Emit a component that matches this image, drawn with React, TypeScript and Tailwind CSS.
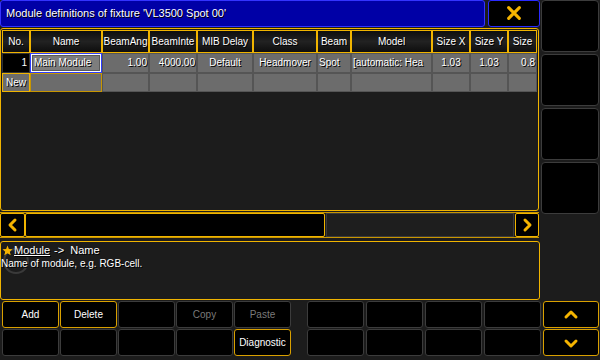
import React from "react";

const COLS = [
  { h: "No.", w: 28 },
  { h: "Name", w: 72 },
  { h: "BeamAng", w: 47 },
  { h: "BeamInte", w: 48 },
  { h: "MIB Delay", w: 56 },
  { h: "Class", w: 64 },
  { h: "Beam", w: 34 },
  { h: "Model", w: 81 },
  { h: "Size X", w: 38 },
  { h: "Size Y", w: 38 },
  { h: "Size", w: 29 },
];

const ROW1 = [
  { t: "1.00", a: "justify-end" },
  { t: "4000.00", a: "justify-end" },
  { t: "Default", a: "justify-center" },
  { t: "Headmover", a: "justify-center" },
  { t: "Spot", a: "justify-start" },
  { t: "[automatic: Hea", a: "justify-start" },
  { t: "1.03", a: "justify-center" },
  { t: "1.03", a: "justify-center" },
  { t: "0.8", a: "justify-end" },
];

function Btn({ label, hot, dim }: { label?: string; hot?: boolean; dim?: boolean }) {
  return (
    <div
      className={`w-[57px] h-[27px] rounded-[3px] bg-black border flex items-center justify-center text-[10px] ${
        hot ? "border-[#d9a000]" : "border-[#3c3c3c]"
      } ${dim ? "text-[#7a7a7a]" : "text-white"}`}
    >
      {label}
    </div>
  );
}

function Chevron({ dir }: { dir: "left" | "right" | "up" | "down" }) {
  const d = {
    left: "M10 3 L5 8 L10 13",
    right: "M6 3 L11 8 L6 13",
    up: "M3 10 L8 5 L13 10",
    down: "M3 6 L8 11 L13 6",
  }[dir];
  return (
    <svg width="16" height="16" viewBox="0 0 16 16">
      <path d={d} fill="none" stroke="#f5b400" strokeWidth="3" strokeLinecap="round" strokeLinejoin="round" />
    </svg>
  );
}

function ButtonRow({ cells, arrow }: { cells: React.ReactNode[]; arrow: "up" | "down" }) {
  return (
    <div className="flex">
      <div className="flex gap-[1px]">{cells.slice(0, 5)}</div>
      <div className="flex gap-[2px] ml-[16px]">{cells.slice(5)}</div>
      <div className="ml-[2px] w-[56px] h-[27px] rounded-[3px] bg-black border border-[#d9a000] flex items-center justify-center">
        <Chevron dir={arrow} />
      </div>
    </div>
  );
}

export default function App() {
  return (
    <div className="w-[600px] h-[360px] bg-[#1c1c1c] font-['Liberation_Sans',Arial,sans-serif] text-white [text-shadow:1px_1px_0_#000] overflow-hidden">
      <div className="flex h-[300px]">
        {/* left */}
        <div className="w-[540px] flex flex-col">
          <div className="flex h-[27px] gap-[3px]">
            <div className="w-[485px] bg-[#0000a6] border border-[#3333ff] rounded-[3px] flex items-center pl-[5px] text-[11px]">
              Module definitions of fixture 'VL3500 Spot 00'
            </div>
            <div className="w-[52px] bg-black border border-[#2a2aff] rounded-[3px] flex items-center justify-center">
              <svg width="16" height="16" viewBox="0 0 18 18">
                <path d="M3 3 L15 15 M15 3 L3 15" stroke="#f5b400" strokeWidth="3.5" strokeLinecap="round" />
              </svg>
            </div>
          </div>

          {/* table panel */}
          <div className="mt-[1px] h-[184px] w-[539px] border border-[#f0b400] rounded-[3px] bg-[#1c1c1c] p-[1px] text-[10px]">
            <div className="flex h-[23px]">
              {COLS.map((c) => (
                <div
                  key={c.h}
                  style={{ width: c.w }}
                  className="shrink-0 border border-[#f0b400] bg-gradient-to-b from-[#0e0e0e] via-[#222222] to-[#0e0e0e] flex items-center justify-center overflow-hidden whitespace-nowrap"
                >
                  {c.h}
                </div>
              ))}
            </div>
            <div className="flex h-[20px]">
              <div className="w-[28px] shrink-0 bg-black border border-[#333] flex items-center justify-end pr-[2px]">1</div>
              <div className="w-[72px] shrink-0 border border-[#2a3cff] bg-white p-[1px]">
                <div className="h-full bg-[#7d7d7d] border border-[#5a5a5a] flex items-center pl-[1px] whitespace-nowrap overflow-hidden">
                  Main Module
                </div>
              </div>
              {ROW1.map((c, i) => (
                <div
                  key={i}
                  style={{ width: COLS[i + 2].w }}
                  className={`shrink-0 bg-[#6c6c6c] border border-[#555] flex items-center ${c.a} px-[1px] whitespace-nowrap overflow-hidden`}
                >
                  {c.t}
                </div>
              ))}
            </div>
            <div className="flex h-[19px]">
              <div className="w-[28px] shrink-0 bg-[#6c6c6c] border border-[#f0b400] flex items-center justify-center">New</div>
              <div className="w-[72px] shrink-0 bg-[#6c6c6c] border border-[#c89600]" />
              {COLS.slice(2).map((c) => (
                <div key={c.h} style={{ width: c.w }} className="shrink-0 bg-[#6c6c6c] border border-[#555]" />
              ))}
            </div>
          </div>

          {/* scroll bar */}
          <div className="mt-[1px] h-[26px] w-[539px] border-y border-[#c89600] flex">
            <div className="w-[25px] bg-black border border-[#f0b400] rounded-[2px] flex items-center justify-center">
              <Chevron dir="left" />
            </div>
            <div className="w-[300px] bg-black border border-[#f0b400] rounded-[2px]" />
            <div className="flex-1 bg-[#1e1e1e] border border-[#3a3a3a] mx-[1px]" />
            <div className="w-[24px] bg-black border border-[#f0b400] rounded-[2px] flex items-center justify-center">
              <Chevron dir="right" />
            </div>
          </div>

          {/* info panel */}
          <div className="mt-[3px] h-[59px] w-[540px] border border-[#f0b400] rounded-[3px] bg-[#1c1c1c] text-[11px] relative overflow-hidden">
            <div className="absolute left-[2px] top-[6px] w-[26px] h-[26px] rounded-full border-2 border-[#3a3a3a]" />
            <div className="relative flex items-center pt-[1px] pl-[1px] leading-[14px]">
              <svg width="11" height="11" viewBox="0 0 24 24">
                <path d="M12 1 L15 8.5 L23 9 L17 14.5 L19 22.5 L12 18 L5 22.5 L7 14.5 L1 9 L9 8.5 Z" fill="#f5b400" />
              </svg>
              <span className="underline ml-[1px]">Module</span>
              <span className="ml-[4px]">-&gt;&nbsp;&nbsp;Name</span>
            </div>
            <div className="relative leading-[14px] text-[10px]">Name of module, e.g. RGB-cell.</div>
          </div>
        </div>

        {/* right column */}
        <div className="ml-[1px] w-[58px] flex flex-col gap-[2px]">
          {[0, 1, 2, 3].map((i) => (
            <div key={i} className="h-[52px] bg-black border border-[#3c3c3c] rounded-[4px]" />
          ))}
        </div>
      </div>

      {/* bottom buttons */}
      <div className="flex flex-col gap-[1px] mt-[1px] pl-[2px]">
        <ButtonRow
          arrow="up"
          cells={[
            <Btn key="a" label="Add" hot />,
            <Btn key="b" label="Delete" hot />,
            <Btn key="c" />,
            <Btn key="d" label="Copy" dim />,
            <Btn key="e" label="Paste" dim />,
            <Btn key="f" />,
            <Btn key="g" />,
            <Btn key="h" />,
            <Btn key="i" />,
          ]}
        />
        <ButtonRow
          arrow="down"
          cells={[
            <Btn key="a" />,
            <Btn key="b" />,
            <Btn key="c" />,
            <Btn key="d" />,
            <Btn key="e" label="Diagnostic" hot />,
            <Btn key="f" />,
            <Btn key="g" />,
            <Btn key="h" />,
            <Btn key="i" />,
          ]}
        />
      </div>
    </div>
  );
}
